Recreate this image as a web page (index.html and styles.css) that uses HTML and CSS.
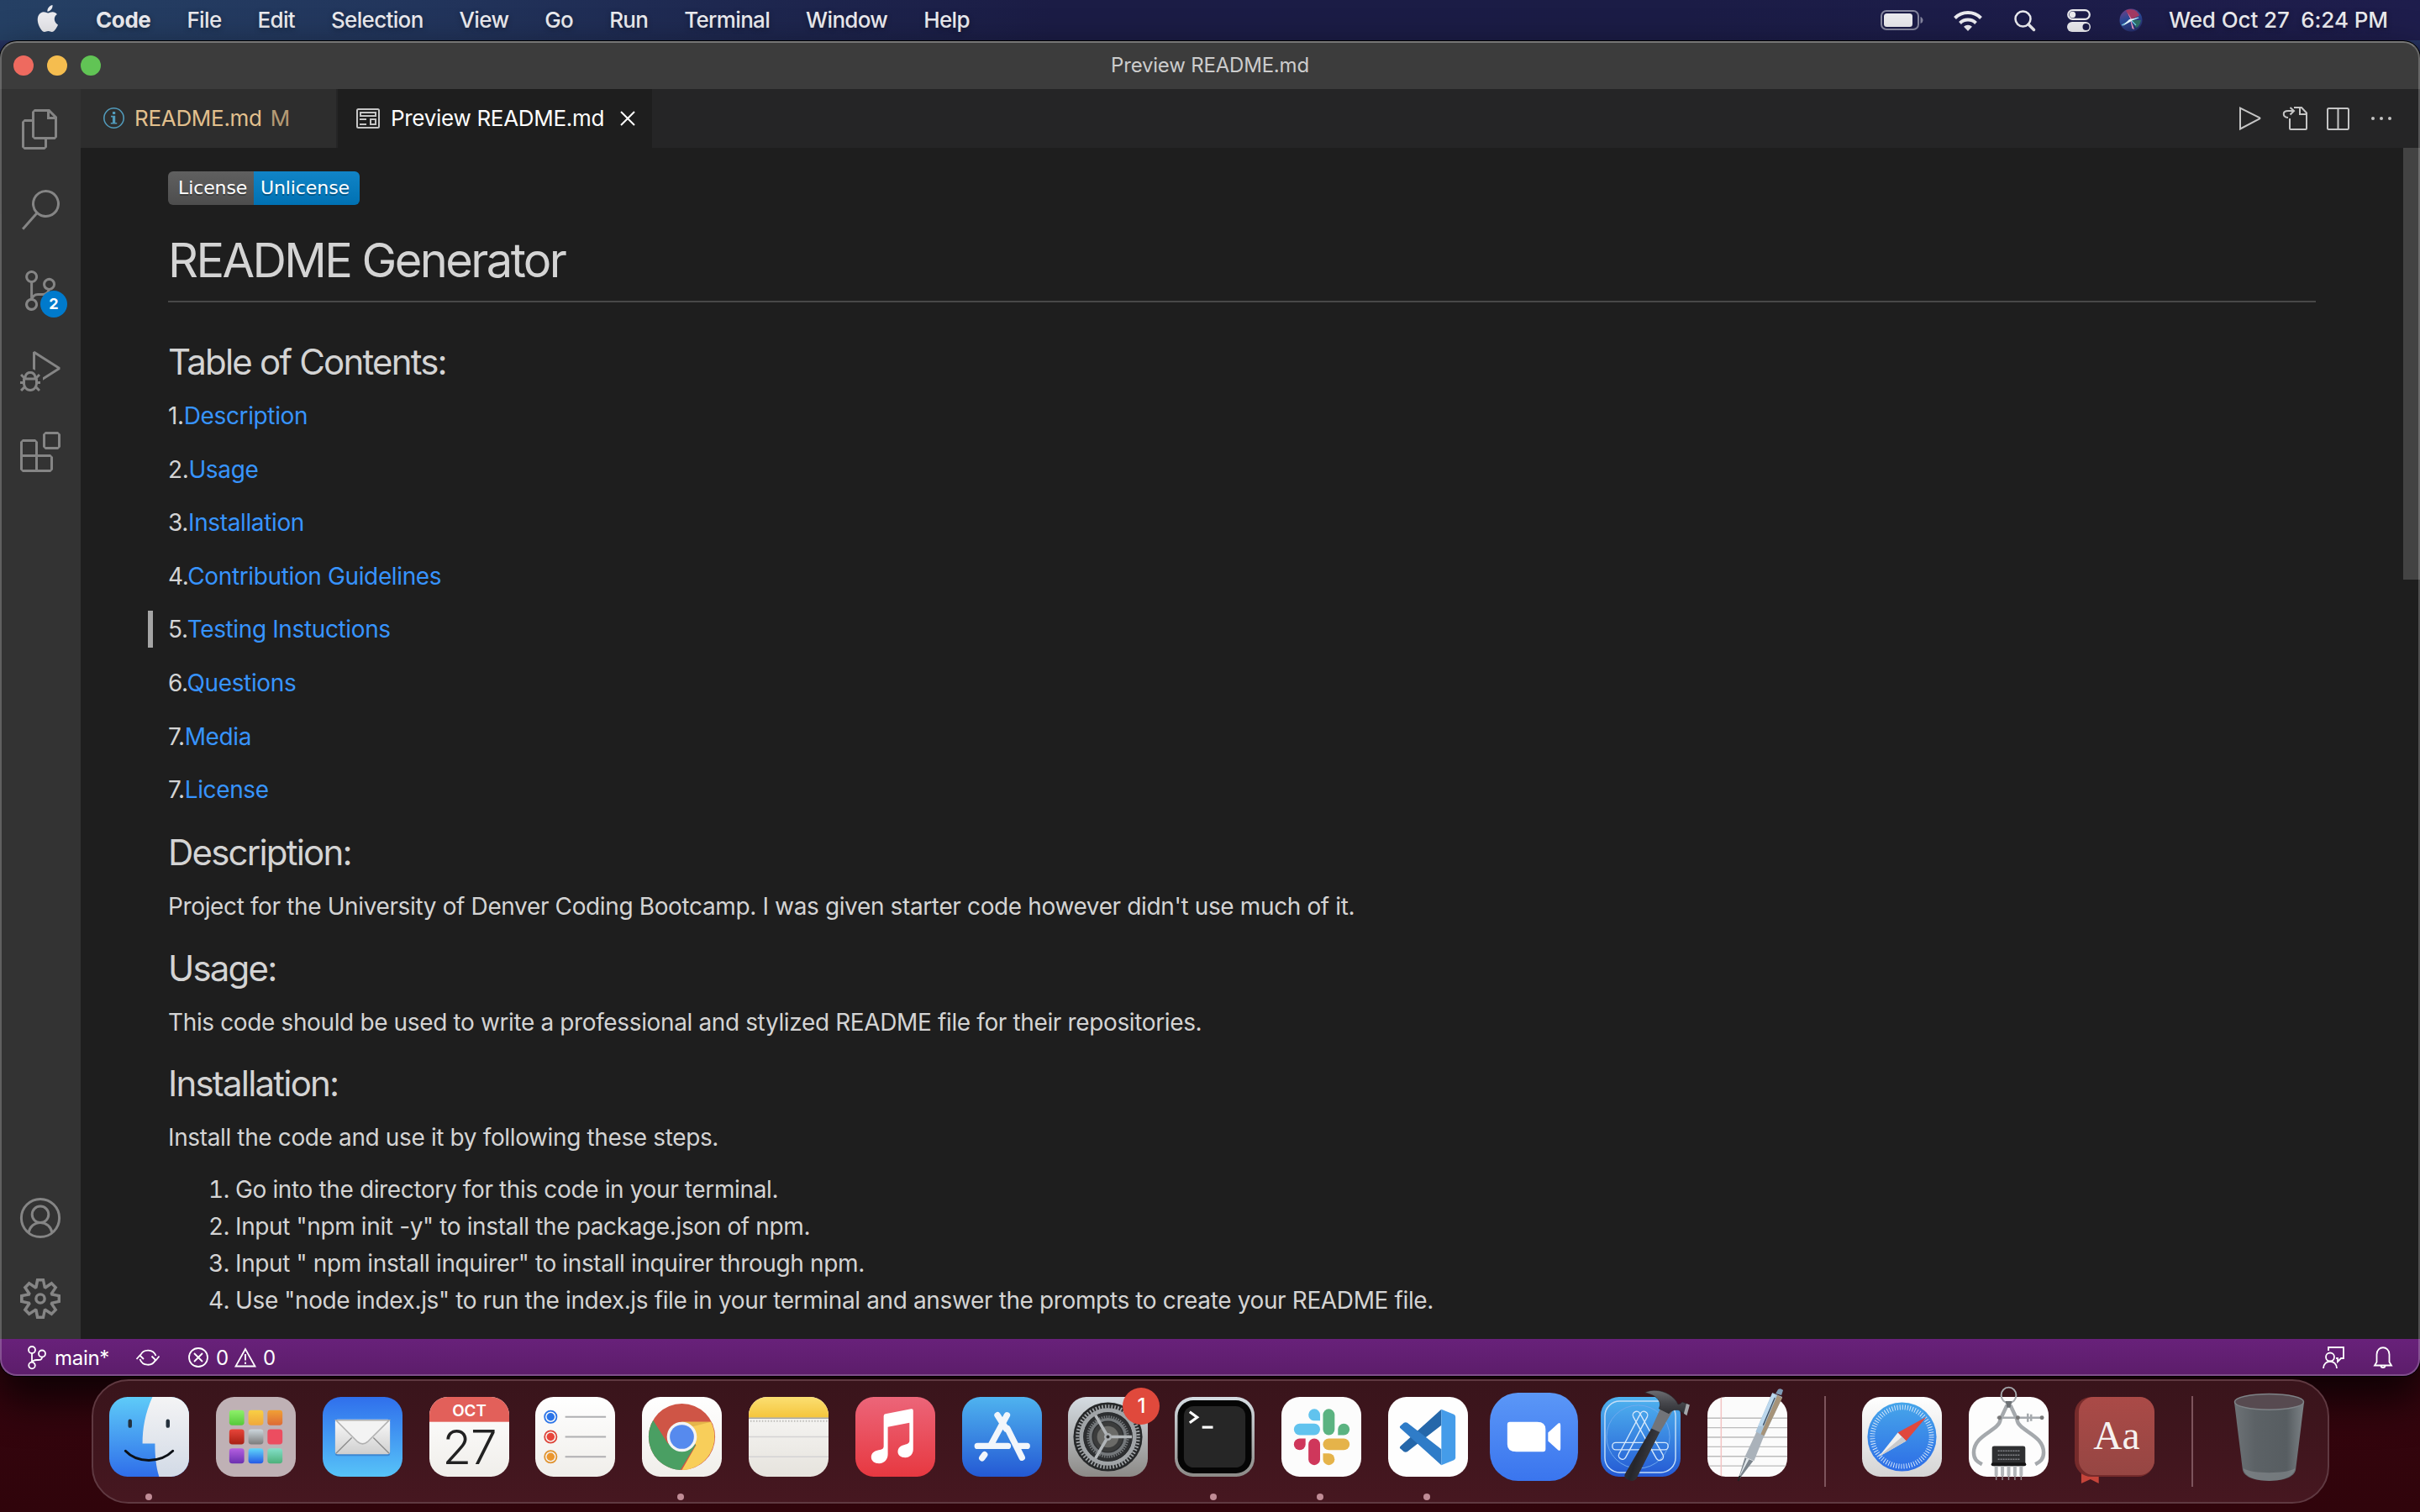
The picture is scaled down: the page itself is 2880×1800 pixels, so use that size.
FILE: index.html
```html
<!DOCTYPE html>
<html lang="en">
<head>
<meta charset="utf-8">
<title>Preview README.md</title>
<link rel="stylesheet" href="styles.css">
</head>
<body>
<header class="menubar">
  <svg class="apple" viewBox="0 0 26 32"><path fill="#ebebef" d="M18.500 0c.3 2.300-.6 4.200-1.800 5.600-1.200 1.400-2.800 2.300-4.300 2.100-.3-2.200.7-4.100 1.800-5.300C15.400 1.100 17.100.2 18.500 0zM25 23.500c-.9 2.100-1.400 3-2.500 4.700-1.500 2.200-3.100 3.700-4.700 3.700-1.700 0-2.200-1-4.400-1s-2.800 1-4.400 1c-1.800 0-3.300-1.600-4.700-3.700C.6 22.600-.4 15.700 2.200 11.800c1.400-2.200 3.500-3.500 5.800-3.500 2.100 0 3.500 1.100 5.300 1.100 1.700 0 2.800-1.100 5.300-1.100 2 0 3.900 1 5.300 2.800-4.600 2.700-3.900 9.900 1.100 12.400z"/></svg>
  <nav class="menus"><b>Code</b><span>File</span><span>Edit</span><span>Selection</span><span>View</span><span>Go</span><span>Run</span><span>Terminal</span><span>Window</span><span>Help</span></nav>
  <div class="extras">
    <svg class="battery" viewBox="0 0 51 24"><rect x="1" y="1" width="44" height="22" rx="6" fill="none" stroke="#85869f" stroke-width="2"/><rect x="4" y="4" width="34" height="16" rx="3.500" fill="#ebebef"/><path d="M47.500 8c4 1.500 4 6.500 0 8z" fill="#85869f"/></svg>
    <svg class="wifi" viewBox="0 0 34 25"><g fill="none" stroke="#ebebef" stroke-width="4"><path d="M1.500 9.500a22 22 0 0 1 31 0"/><path d="M7.500 15.500a13.500 13.500 0 0 1 19 0"/></g><path fill="#ebebef" d="M17 25l-5-5.300a7.500 7.500 0 0 1 10 0z"/></svg>
    <svg class="spot" viewBox="0 0 25 25"><circle cx="10.500" cy="10.500" r="9" fill="none" stroke="#ebebef" stroke-width="2.500"/><path d="M17 17l6.500 6.500" stroke="#ebebef" stroke-width="3.500" stroke-linecap="round"/></svg>
    <svg class="control" viewBox="0 0 28 27"><rect x="1.200" y="1.200" width="25.600" height="10.600" rx="5.300" fill="none" stroke="#ebebef" stroke-width="2.200"/><circle cx="6.500" cy="6.500" r="3.700" fill="#ebebef"/><rect y="15" width="28" height="12" rx="6" fill="#ebebef"/><circle cx="22.500" cy="21" r="4" fill="#1c1c48"/></svg>
    <svg class="siri" viewBox="0 0 28 28"><defs><linearGradient id="sr" x1="0" x2=".4" y1="0" y2="1"><stop offset="0" stop-color="#7d3f83"/><stop offset=".5" stop-color="#2b4a98"/><stop offset="1" stop-color="#27316f"/></linearGradient></defs><circle cx="14" cy="14" r="13.500" fill="url(#sr)"/><path d="M8 2.500c7-3 14 0 16 6l-10 5z" fill="#a33a63"/><path d="M26 14c-1 5-3 8-6 9l-5-9z" fill="#2e6f68"/><path d="M3 20l11-6 9-3M14 14l6 6" stroke="#74d6f2" stroke-width="1.200" fill="none"/><path d="M13 13l1 1 4 11-2.500-1zM10 5l5 8-1 1z" fill="#e79ac4"/><path d="M4 21l8-8 12-2-8 3-3 2z" fill="#e8faff"/></svg>
    <span class="clock">Wed Oct 27&nbsp; 6:24 PM</span>
  </div>
</header>

<main class="window">
  <div class="titlebar"><div class="lights"><i class="red"></i><i class="yellow"></i><i class="green"></i></div><span>Preview README.md</span></div>
  <div class="body">
    <aside class="activity">
      <div class="act"><svg viewBox="0 0 24 24"><path d="M17.500 0h-9L7 1.500V6H2.500L1 7.500v15.070L2.500 24h12.070L16 22.570V18h4.700l1.300-1.430V4.500L17.500 0zm0 2.120l2.380 2.380H17.500V2.120zm-3 20.380h-12v-15H7v9.070L8.500 18h6v4.500zm6-6h-12v-15H16V6h4.500v10.500z"/></svg></div>
      <div class="act"><svg viewBox="0 0 24 24"><path d="M15.250 0a8.250 8.250 0 0 0-6.180 13.720L1 22.880l1.120 1 8.050-9.120A8.251 8.251 0 1 0 15.250.01V0zm0 15a6.750 6.750 0 1 1 0-13.500 6.750 6.750 0 0 1 0 13.500z"/></svg></div>
      <div class="act"><svg viewBox="0 0 24 24"><path d="M21.007 8.222A3.738 3.738 0 0 0 15.045 5.200a3.737 3.737 0 0 0 1.156 6.583 2.988 2.988 0 0 1-2.668 1.670h-2.990a4.456 4.456 0 0 0-2.989 1.165V7.400a3.737 3.737 0 1 0-1.494 0v9.117a3.776 3.776 0 1 0 1.816.099 2.990 2.990 0 0 1 2.668-1.667h2.990a4.484 4.484 0 0 0 4.223-3.039 3.736 3.736 0 0 0 3.250-3.687zM4.565 3.738a2.242 2.242 0 1 1 4.484 0 2.242 2.242 0 0 1-4.484 0zm4.484 16.441a2.242 2.242 0 1 1-4.484 0 2.242 2.242 0 0 1 4.484 0zm8.221-9.715a2.242 2.242 0 1 1 0-4.485 2.242 2.242 0 0 1 0 4.485z"/></svg><b class="count">2</b></div>
      <div class="act"><svg viewBox="0 0 24 24"><path d="M10.940 13.500l-1.320 1.320a3.730 3.730 0 0 0-7.240 0L1.060 13.500 0 14.560l1.720 1.720-.22.22V18H0v1.500h1.500v.08c.077.489.214.966.41 1.420L0 22.940 1.060 24l1.650-1.650A4.308 4.308 0 0 0 6 24a4.310 4.310 0 0 0 3.290-1.650L10.940 24 12 22.940 10.090 21c.198-.464.336-.951.41-1.450v-.1H12V18h-1.500v-1.500l-.22-.22L12 14.560l-1.060-1.060zM6 13.500a2.250 2.250 0 0 1 2.250 2.250h-4.500A2.250 2.250 0 0 1 6 13.500zm3 6a3.330 3.330 0 0 1-3 3 3.330 3.330 0 0 1-3-3v-2.250h6v2.250zm14.760-9.900v1.260L13.500 17.370V15.600l8.500-5.370L9 2v9.460a5.070 5.070 0 0 0-1.500-.72V.63L8.640 0l15.120 9.600z"/></svg></div>
      <div class="act"><svg viewBox="0 0 24 24"><path d="M13.500 1.500L15 0h7.500L24 1.500V9l-1.500 1.500H15L13.500 9V1.500zm1.500 0V9h7.500V1.500H15zM0 15V6l1.500-1.500H9L10.500 6v7.500H18l1.500 1.500v7.500L18 24H1.500L0 22.500V15zm9-1.500V6H1.500v7.500H9zM9 15H1.500v7.500H9V15zm1.500 7.500H18V15h-7.500v7.500z"/></svg></div>
      <div class="act last"><svg viewBox="0 0 24 24" class="line"><circle cx="12" cy="12" r="11.300"/><circle cx="12" cy="9.900" r="4.900"/><path d="M5 20.800c.6-3.500 3.400-6.100 7-6.100s6.400 2.600 7 6.100"/></svg></div>
      <div class="act"><svg viewBox="0 0 24 24"><path fill-rule="evenodd" d="M19.850 8.750l4.150.83v4.840l-4.150.83 2.350 3.520-3.430 3.430-3.520-2.350-.83 4.150H9.580l-.83-4.150-3.520 2.350-3.430-3.430 2.350-3.520L0 14.420V9.580l4.150-.83L1.800 5.230 5.230 1.800l3.520 2.350L9.580 0h4.840l.83 4.150 3.520-2.350 3.430 3.430-2.350 3.520zm-1.570 5.070l4-.81v-2l-4-.81-.54-1.300 2.290-3.430-1.430-1.430-3.430 2.290-1.300-.54-.81-4h-2l-.81 4-1.300.54-3.430-2.290-1.430 1.430L6.380 8.900l-.54 1.300-4 .81v2l4 .81.540 1.300-2.290 3.430 1.430 1.430 3.430-2.290 1.300.54.810 4h2l.81-4 1.300-.54 3.430 2.290 1.430-1.430-2.290-3.430.54-1.300zM12 8.570a3.430 3.430 0 1 1 0 6.860 3.430 3.430 0 0 1 0-6.860zm0 1.720a1.710 1.710 0 1 0 0 3.420 1.710 1.710 0 0 0 0-3.420z"/></svg></div>
    </aside>
    <section class="editor">
      <div class="tabs">
        <div class="tab idle"><svg class="info" viewBox="0 0 25 25"><circle cx="12.500" cy="12.500" r="11.700" fill="none" stroke="#519aba" stroke-width="1.600"/><path fill="#519aba" d="M11 5h3.200v3H11zM9 9.800h5.200v8.200h2v1.600H8.800V18h2.200v-6.600H9z"/></svg><span>README.md</span><em>M</em></div>
        <div class="tab active"><svg class="pv" viewBox="0 0 28 24"><g fill="none" stroke="#c5c5c5" stroke-width="2"><rect x="1" y="1" width="26" height="22" rx="1.500"/><rect x="5" y="5" width="18" height="4"/><path d="M4 13h8M4 19h8"/><rect x="17" y="13" width="6" height="6"/></g></svg><span>Preview README.md</span><svg class="close" viewBox="0 0 18 18"><path d="M1 1l16 16M17 1L1 17" stroke="#fff" stroke-width="2"/></svg></div>
        <div class="actions">
          <svg class="play" viewBox="0 0 28 28"><path d="M2 1.500v25L25 14.500q1-.7 0-1.400z"/></svg>
          <svg class="open" viewBox="0 0 30 28"><path d="M14 1h9l6 6.500V26q0 1-1 1H10q-1 0-1-1V14M21 1.500V9h7.500"/><path d="M7 13c-7-1-7-8 0-8h6M9.500 1L14 5l-4.500 4.500"/></svg>
          <svg class="split" viewBox="0 0 27 27"><rect x="1" y="1" width="25" height="25" rx="1.500"/><path d="M13.500 1v25"/></svg>
          <svg class="more" viewBox="0 0 26 6"><g fill="#c5c5c5" stroke="none"><circle cx="3" cy="3" r="2"/><circle cx="13" cy="3" r="2"/><circle cx="23" cy="3" r="2"/></g></svg>
        </div>
      </div>
      <div class="preview">
        <article class="md">
          <div class="shield"><span class="key">License</span><span class="val">Unlicense</span></div>
          <h1>README Generator</h1>
          <h2 class="first">Table of Contents:</h2>
          <div class="toc">
            <p>1.<a>Description</a></p>
            <p>2.<a>Usage</a></p>
            <p>3.<a>Installation</a></p>
            <p>4.<a>Contribution Guidelines</a></p>
            <p class="current">5.<a>Testing Instuctions</a></p>
            <p>6.<a>Questions</a></p>
            <p>7.<a>Media</a></p>
            <p>7.<a>License</a></p>
          </div>
          <h2>Description:</h2>
          <p>Project for the University of Denver Coding Bootcamp. I was given starter code however didn't use much of it.</p>
          <h2>Usage:</h2>
          <p>This code should be used to write a professional and stylized README file for their repositories.</p>
          <h2>Installation:</h2>
          <p>Install the code and use it by following these steps.</p>
          <ol>
            <li>Go into the directory for this code in your terminal.</li>
            <li>Input "npm init -y" to install the package.json of npm.</li>
            <li>Input " npm install inquirer" to install inquirer through npm.</li>
            <li>Use "node index.js" to run the index.js file in your terminal and answer the prompts to create your README file.</li>
          </ol>
        </article>
        <div class="scroll"></div>
      </div>
    </section>
  </div>
  <footer class="status">
    <svg class="branch" viewBox="0 0 22 28"><circle cx="5" cy="5" r="4"/><circle cx="5" cy="23.500" r="3.800"/><circle cx="17" cy="9.500" r="4"/><path d="M5 9v10.500M17 13.500c0 4-3 3.500-6 3.500s-5 .5-6 3"/></svg>
    <span class="br">main*</span>
    <svg class="sync" viewBox="0 0 28 22"><path d="M5 8.500A10 10 0 0 1 23.500 9M23 14A10 10 0 0 1 4.500 13"/><path d="M18.500 9.500l5 5 4-5M.500 13l4-4.500 4.500 4.500"/></svg>
    <svg class="err" viewBox="0 0 24 24"><circle cx="12" cy="12" r="11"/><path d="M7 7l10 10M17 7L7 17"/></svg>
    <span class="n1">0</span>
    <svg class="warn" viewBox="0 0 26 24"><path d="M13 2L1.500 22.500h23zM13 8v7.500M13 17.500V20"/></svg>
    <span class="n2">0</span>
    <svg class="fb" viewBox="0 0 26 26"><path d="M7 5V1h18v13h-3l-4 4v-4h-2"/><circle cx="9" cy="12.500" r="5"/><path d="M1 26c0-11 16-11 16 0"/></svg>
    <svg class="bell" viewBox="0 0 22 26"><path d="M3.500 18.500V9.500c0-11 15-11 15 0v9l2.500 4H1z"/><path d="M8.500 22.500c0 3.500 5 3.500 5 0"/></svg>
  </footer>
</main>

<div class="dock">
  <div class="app on"><svg viewBox="0 0 96 96"><defs><linearGradient id="f1" x2="0" y2="1"><stop stop-color="#5ecbf8"/><stop offset="1" stop-color="#2f6eea"/></linearGradient><linearGradient id="f2" x2="0" y2="1"><stop stop-color="#f4f4f5"/><stop offset="1" stop-color="#d2dae6"/></linearGradient><clipPath id="t"><rect width="96" height="96" rx="22"/></clipPath></defs><g clip-path="url(#t)"><rect width="96" height="96" fill="url(#f1)"/><path d="M52 0C43 20 40 38 40 56h15c0 14 1 27 5 40h36V0z" fill="url(#f2)"/></g><path d="M25 29v6M70.500 29v6" stroke="#23303c" stroke-width="4.500" stroke-linecap="round"/><path d="M19.500 65c14 15 42 15 57 0" fill="none" stroke="#0c1016" stroke-width="3" stroke-linecap="round"/></svg></div>
  <div class="app"><svg viewBox="0 0 96 96"><defs><linearGradient id="l1" x2="0" y2="1"><stop stop-color="#8ef06a"/><stop offset="1" stop-color="#56c93a"/></linearGradient><linearGradient id="l2" x2="0" y2="1"><stop stop-color="#f8cf45"/><stop offset="1" stop-color="#f0a83a"/></linearGradient><linearGradient id="l3" x2="0" y2="1"><stop stop-color="#f0a035"/><stop offset="1" stop-color="#dd6a35"/></linearGradient><linearGradient id="l4" x2="0" y2="1"><stop stop-color="#e8453a"/><stop offset="1" stop-color="#a81f14"/></linearGradient><linearGradient id="l5" x2="0" y2="1"><stop stop-color="#ccd6dc"/><stop offset="1" stop-color="#7c7c7c"/></linearGradient><linearGradient id="l7" x2="0" y2="1"><stop stop-color="#b45fe0"/><stop offset="1" stop-color="#6b30b0"/></linearGradient><linearGradient id="l8" x2="0" y2="1"><stop stop-color="#5fd6fa"/><stop offset="1" stop-color="#2459e6"/></linearGradient><linearGradient id="l9" x2="0" y2="1"><stop stop-color="#83dfc8"/><stop offset="1" stop-color="#4db07a"/></linearGradient></defs><rect width="96" height="96" rx="22" fill="#bfb1b5"/><g><rect x="16" y="16" width="18" height="18" rx="3.500" fill="url(#l1)"/><rect x="39" y="16" width="18" height="18" rx="3.500" fill="url(#l2)"/><rect x="62" y="16" width="18" height="18" rx="3.500" fill="url(#l3)"/><rect x="16" y="39" width="18" height="18" rx="3.500" fill="url(#l4)"/><rect x="39" y="39" width="18" height="18" rx="3.500" fill="url(#l5)"/><rect x="62" y="39" width="18" height="18" rx="3.500" fill="#ec4d60"/><rect x="16" y="62" width="18" height="18" rx="3.500" fill="url(#l7)"/><rect x="39" y="62" width="18" height="18" rx="3.500" fill="url(#l8)"/><rect x="62" y="62" width="18" height="18" rx="3.500" fill="url(#l9)"/></g></svg></div>
  <div class="app"><svg viewBox="0 0 96 96"><defs><linearGradient id="m1" x2="0" y2="1"><stop stop-color="#2f6fec"/><stop offset="1" stop-color="#57c3f8"/></linearGradient><linearGradient id="m2" x2="0" y2="1"><stop stop-color="#fafafa"/><stop offset="1" stop-color="#cfcfcf"/></linearGradient></defs><rect width="96" height="96" rx="22" fill="url(#m1)"/><rect x="15" y="29" width="66" height="42" rx="3" fill="#2a62b0" opacity=".5"/><rect x="15" y="27" width="66" height="42" rx="3" fill="url(#m2)"/><path d="M16 68l19-19M80 68L61 49" stroke="#8a8a8a" stroke-width="1.300"/><path d="M16 28l26 26q6 5 12 0l26-26z" fill="#f3f3f3" stroke="#b0b0b0" stroke-width="1.600"/></svg></div>
  <div class="app"><svg viewBox="0 0 96 96"><defs><linearGradient id="c1" x2="0" y2="1"><stop stop-color="#fff"/><stop offset="1" stop-color="#f0eeea"/></linearGradient></defs><g clip-path="url(#t)"><rect width="96" height="96" fill="url(#c1)"/><rect width="96" height="30" fill="#e2605a"/></g><text x="48" y="23" class="oct">OCT</text><text x="48" y="81" class="day">27</text></svg></div>
  <div class="app"><svg viewBox="0 0 96 96"><rect width="96" height="96" rx="22" fill="url(#c1)"/><g fill="none" stroke-width="1.800"><circle cx="18.500" cy="24" r="7.200" stroke="#2b74e8"/><circle cx="18.500" cy="48" r="7.200" stroke="#dd4438"/><circle cx="18.500" cy="72" r="7.200" stroke="#e0922e"/><path d="M36 24h49M36 48h49M36 72h49" stroke="#b0b0b2"/></g><circle cx="18.500" cy="24" r="4.800" fill="#2b74e8"/><circle cx="18.500" cy="48" r="4.800" fill="#e8453a"/><circle cx="18.500" cy="72" r="4.800" fill="#eb962e"/></svg></div>
  <div class="app on"><svg viewBox="0 0 96 96"><rect width="96" height="96" rx="22" fill="url(#c1)"/><circle cx="48" cy="48" r="40" fill="#cf5546"/><path d="M13.400 28A40 40 0 0 0 46 88l19-31-34-1z" fill="#4a9f63"/><path d="M83 30H48l17 28-17 30A40 40 0 0 0 83 30z" fill="#f8ce5a"/><path d="M83 30H48v9z" fill="#e5b54a"/><circle cx="48" cy="48" r="18" fill="#f4f4f4"/><circle cx="48" cy="48" r="14.500" fill="#568aee"/></svg></div>
  <div class="app"><svg viewBox="0 0 96 96"><defs><linearGradient id="n1" x2="0" y2="1"><stop stop-color="#fbdf72"/><stop offset="1" stop-color="#f5c53c"/></linearGradient><linearGradient id="n2" x2="0" y2="1"><stop stop-color="#f9f9f8"/><stop offset="1" stop-color="#e6e3dd"/></linearGradient></defs><g clip-path="url(#t)"><rect width="96" height="96" fill="url(#n2)"/><rect width="96" height="25" fill="url(#n1)"/><path d="M0 25.500h96" stroke="#a5a4a0" stroke-width="1.600"/><path d="M2 29h94" stroke="#bdbcb9" stroke-width="2" stroke-dasharray="1.500 2"/><path d="M0 48h96M0 72h96" stroke="#d4d3d4" stroke-width="1.700"/></g></svg></div>
  <div class="app"><svg viewBox="0 0 96 96"><defs><linearGradient id="mu" x2="0" y2="1"><stop stop-color="#ec6579"/><stop offset="1" stop-color="#e73840"/></linearGradient></defs><rect width="96" height="96" rx="22" fill="url(#mu)"/><path fill="#fff" d="M34 23q0-2 2-2.500l31-6q2.500-.5 2.500 2V63c0 6-4 10-9.500 10s-9-3-9-7c0-5 3.500-7.500 8-8.500 4-1 6-2 6-5V31L39 36v33c0 6-4 11-10.500 11C23 80 19 77 19 72.500c0-5 4-7.500 9-8.500 4-1 6-1.500 6-5z"/></svg></div>
  <div class="app"><svg viewBox="0 0 96 96"><defs><linearGradient id="as" x2="0" y2="1"><stop stop-color="#4fb3ef"/><stop offset="1" stop-color="#2459d4"/></linearGradient></defs><rect width="96" height="96" rx="22" fill="url(#as)"/><g stroke="#f2f6fb" stroke-width="7.500" stroke-linecap="round" fill="none"><path d="M42.500 22L53 38.500M54.500 38l17.500 35M54 22L35 57M18.500 59H55M66 59h12M27 69.500l-3 4"/></g></svg></div>
  <div class="app"><svg viewBox="0 0 96 96"><defs><linearGradient id="sp" x2="0" y2="1"><stop stop-color="#d5dce2"/><stop offset="1" stop-color="#8c8a87"/></linearGradient></defs><rect width="96" height="96" rx="22" fill="url(#sp)"/><circle cx="48" cy="48" r="41.500" fill="#262829"/><circle cx="48" cy="48" r="36.500" fill="none" stroke="#a0a4a7" stroke-width="4.500" stroke-dasharray="1.800 2.020"/><circle cx="48" cy="48" r="32" fill="none" stroke="#a0a4a7" stroke-width="5"/><circle cx="48" cy="48" r="29.500" fill="#2c2e30"/><circle cx="48" cy="48" r="24" fill="none" stroke="#74787b" stroke-width="3" stroke-dasharray="1.500 1.400"/><circle cx="48" cy="48" r="21" fill="none" stroke="#74787b" stroke-width="3.500"/><circle cx="48" cy="48" r="18" fill="#3b3c3c"/><circle cx="48" cy="48" r="13" fill="#6b6b68"/><path d="M48 48h29M48 48L33 22M48 48L33 74" stroke="#b2b6b9" stroke-width="3.600"/><circle cx="48" cy="48" r="4.500" fill="#a9adb0"/><circle cx="48" cy="48" r="2" fill="#333"/></svg><b class="notif">1</b></div>
  <div class="app on"><svg viewBox="0 0 96 96"><rect width="96" height="96" rx="22" fill="url(#sp)"/><rect x="3.500" y="4" width="89" height="88" rx="19" fill="#050505"/><rect x="11" y="11" width="74" height="74" rx="12" fill="#262626"/><path d="M18 18l9 6.500-9 6.500" fill="none" stroke="#fff" stroke-width="3.200"/><path d="M33 36.500h13" stroke="#fff" stroke-width="3.200"/></svg></div>
  <div class="app on"><svg viewBox="0 0 96 96"><rect width="96" height="96" rx="22" fill="#fcfcfc"/><g stroke-width="14" stroke-linecap="round"><path d="M57 21.500v17.500" stroke="#5bb381"/><path d="M22 39h17.500" stroke="#61c3ee"/><path d="M39.500 57v18" stroke="#cf375b"/><path d="M57 57h18" stroke="#e5b34a"/></g><path d="M46.500 28.500H39a7 7 0 1 1 7.500-7z" fill="#61c3ee"/><path d="M68 46v-7a7 7 0 1 1 7 7z" fill="#5bb381"/><path d="M50 68h7a7 7 0 1 1-7 7z" fill="#e5b34a"/><path d="M29 50v7a7 7 0 1 1-7-7z" fill="#cf375b"/></svg></div>
  <div class="app on"><svg viewBox="0 0 96 96"><rect width="96" height="96" rx="22" fill="#fefefe"/><path d="M64 15L15 59q-2 2 0 3.500l4 3.500q2 1 4 0l41-32z" fill="#2567aa"/><path d="M64 82L15 38q-2-2 0-3.500l4-3.500q2-1 4 0l41 32z" fill="#2f7cc8"/><path d="M64 15l15 6q2 1 2 3v49q0 2-2 3l-15 6z" fill="#459ce9"/></svg></div>
  <div class="app"><svg viewBox="0 0 96 96"><defs><linearGradient id="zm" x2="0" y2="1"><stop stop-color="#5b97f7"/><stop offset="1" stop-color="#3a75ee"/></linearGradient></defs><rect x="-5" y="-5" width="106" height="106" rx="34" fill="url(#zm)"/><path fill="#fff" d="M16 33q0-3 3-3h33q10 0 10 9v24q0 3-3 3H27q-11 0-11-9zM65 43l12-11q3-2 3 2v28q0 4-3 2L65 53z"/></svg></div>
  <div class="app"><svg viewBox="0 0 96 96"><defs><linearGradient id="hm" x1="0" x2="1" y2=".5"><stop stop-color="#38383c"/><stop offset=".5" stop-color="#26262b"/><stop offset="1" stop-color="#45464c"/></linearGradient><linearGradient id="hh" x2="0" y2="1"><stop stop-color="#6d6e73"/><stop offset=".5" stop-color="#46474c"/><stop offset="1" stop-color="#2b2c30"/></linearGradient></defs><rect width="96" height="96" rx="22" fill="url(#as)"/><g fill="none" stroke="#c4def8" stroke-width="1.500"><rect x="5" y="5" width="85" height="86" rx="18"/><circle cx="45" cy="48" r="38" stroke="#6ea9ee" stroke-width="1"/><g stroke="#d5e8fb" stroke-width="1.400"><rect x="14" y="55" width="67" height="8.500" rx="4"/><rect x="-4.500" y="0" width="9" height="64" rx="4.500" transform="translate(54 18) rotate(28)"/><rect x="-4.500" y="0" width="9" height="66" rx="4.500" transform="translate(41 18) rotate(-29)"/></g></g><path d="M73 11l14 5-16 27-10-5z" fill="#727479"/><path d="M61 38l10 4.500L43 98q-3 5-9 2-7-2-5-7z" fill="url(#hm)"/><path d="M53-5c8-5 21-3 29 2 5 3 9 7 11 12l3-1 2-2 8 3-3 13-9-6c-5-1-9 0-12 4l-12-6c4-8-2-16-17-19z" fill="url(#hh)" stroke="#232428" stroke-width=".6"/><path d="M103 8l4 1.500-3.500 13L100 20z" fill="#a5a7ab"/></svg></div>
  <div class="app"><svg viewBox="0 0 96 96"><g clip-path="url(#t)"><rect width="96" height="96" fill="#fbfbfb"/><path d="M0 25.500h96M0 37h96M0 48.500h96M0 60h96M0 71.500h96M0 83h96" stroke="#bcbcbc" stroke-width="1.300"/><path d="M16.500 0v96" stroke="#f2c4c4" stroke-width="1.500"/></g><path d="M85-9q3-2 6 1l-2 6-7-2z" fill="#7f9bb5"/><path d="M78-5l12 5-22 48-10-6z" fill="#a9c4da"/><path d="M84-2l6 3-22 46-4-2z" fill="#a69379"/><path d="M78-4l4 2-16 37-5 0z" fill="#bcd8ee"/><path d="M81 1L67 34" stroke="#3d4e60" stroke-width="1.300"/><path d="M59 42l9 5-12 30-11-5z" fill="#aab2ba"/><path d="M45 73l10 4-16 21-2 1z" fill="#7c858d"/><path d="M47 74l3 1-12 22z" fill="#e2e8ec"/><path d="M39 95l-2 6" stroke="#222" stroke-width="2"/></svg></div>
  <i class="sep"></i>
  <div class="app"><svg viewBox="0 0 96 96"><defs><linearGradient id="sf" x2="0" y2="1"><stop stop-color="#fff"/><stop offset="1" stop-color="#d4d4d4"/></linearGradient><linearGradient id="sg" x2="0" y2="1"><stop stop-color="#47a6ea"/><stop offset="1" stop-color="#2d6de6"/></linearGradient></defs><rect width="96" height="96" rx="22" fill="url(#sf)"/><circle cx="48" cy="48" r="41.500" fill="url(#sg)"/><circle cx="48" cy="48" r="35.500" fill="none" stroke="#d5e6fa" stroke-width="6" stroke-dasharray="1 2.098"/><path d="M77.500 24L43 43l10 10z" fill="#e0483e"/><path d="M20 72l23-29 10 10z" fill="#f0f0f0"/><path d="M20 72l28-24 5 5z" fill="#c8c9cc"/></svg></div>
  <div class="app"><svg viewBox="0 0 96 96"><rect width="96" height="96" rx="22" fill="#fdfdfd"/><g fill="none" stroke="#a5a9ad"><ellipse cx="48" cy="-2" rx="9" ry="9.500" stroke-width="2"/><path d="M46 10L38 27c-1 14-32 18-32 40 0 8 4 11 10 14" stroke-width="4.500"/><path d="M50 10l8 17c1 14 32 18 32 40 0 8-4 11-10 14" stroke-width="4.500"/><path d="M34 25h54" stroke-width="2.500"/><path d="M71 20v10M75 21v8" stroke-width="2.500"/></g><path d="M44 5h8l-2 8h-4z" fill="#6d7175"/><circle cx="37" cy="25" r="2.500" fill="#777"/><circle cx="59" cy="25" r="2.500" fill="#777"/><circle cx="88" cy="25" r="2.500" fill="#777"/><rect x="28" y="59" width="40" height="24" rx="2.500" fill="#2f3032"/><rect x="27" y="79" width="42" height="4" rx="2" fill="#161617"/><path d="M35 65h26M35 70h26M35 75h26" stroke="#85868a" stroke-width="1.500" stroke-dasharray="2 1"/><path d="M33 83v12M40.500 83v12M48 83v12M55.500 83v12M63 83v12" stroke="#b4b7ba" stroke-width="4"/><path d="M33 95v5M40.500 95v5M48 95v5M55.500 95v5M63 95v5" stroke="#8c8084" stroke-width="1.500"/></svg></div>
  <div class="app"><svg viewBox="0 0 96 96"><defs><linearGradient id="di" x2="0" y2="1"><stop stop-color="#aa4a47"/><stop offset="1" stop-color="#964643"/></linearGradient></defs><path d="M8 90h21v14l-10-5-11 5z" fill="#c5443a"/><rect width="96" height="96" rx="20" fill="#762b2b"/><rect x="5" width="91" height="94" rx="18" fill="url(#di)"/><text x="50.500" y="63" class="dict">Aa</text></svg></div>
  <i class="sep"></i>
  <div class="app"><svg viewBox="0 0 96 96"><defs><linearGradient id="tr"><stop stop-color="#6d7276"/><stop offset=".3" stop-color="#5c6266"/><stop offset=".75" stop-color="#575d61"/><stop offset="1" stop-color="#7c8286"/></linearGradient></defs><path d="M6 6l10 81c1 8 11 14 32 14s31-6 32-14L90 6z" fill="url(#tr)"/><path d="M17 86c10 7 52 7 62 0-1 9-12 15-31 15s-30-6-31-15z" fill="#8a8f93" opacity=".55"/><ellipse cx="48" cy="6" rx="41.500" ry="9.500" fill="#574a50" stroke="#7e8387" stroke-width="1.500"/></svg></div>
</div>
</body>
</html>
```
FILE: styles.css
```css
* { box-sizing: border-box; }
body {
  margin: 0;
  width: 2880px;
  height: 1800px;
  overflow: hidden;
  display: flex;
  flex-direction: column;
  font-family: Inter, "Liberation Sans", sans-serif;
  background: linear-gradient(180deg, #35588a 0, #1c1c48 80px, #2b0613 900px, #36050f 1600px, #30040b 1800px);
}
svg { display: block; overflow: visible; flex: none; }

/* Menu bar */
.menubar {
  height: 48px;
  flex: none;
  display: flex;
  align-items: center;
  padding: 0 36px 0 44px;
  color: #ebebef;
  font-size: 26px;
  font-weight: 500;
  background: linear-gradient(90deg, #254064 0, #22355c 500px, #1e2850 850px, #1b1c45 1250px, #1b1c46 2000px, #1e1d4c 100%);
  text-shadow: 0 2px 6px rgba(0, 0, 0, .35);
}
.apple { width: 26px; height: 32px; margin-top: -4px; }
.menus { display: flex; gap: 43px; margin-left: 44px; padding-bottom: 1px; letter-spacing: -.67px; }
.menus b { font-weight: 700; letter-spacing: -.4px; }
.extras { display: flex; align-items: center; margin-left: auto; }
.battery { width: 51px; height: 24px; }
.wifi { width: 34px; height: 25px; margin-left: 36px; }
.spot { width: 25px; height: 25px; margin-left: 38px; }
.control { width: 28px; height: 27px; margin-left: 38px; }
.siri { width: 28px; height: 28px; margin-left: 34px; }
.clock { margin-left: 31px; width: 263px; padding-bottom: 1px; white-space: nowrap; letter-spacing: -.1px; }

/* Window */
.window {
  position: relative;
  flex: none;
  height: 1589px;
  margin-top: 1px;
  border-radius: 20px;
  overflow: hidden;
  display: flex;
  flex-direction: column;
  background: #1e1e1e;
  box-shadow: 0 0 0 1px #000, 0 24px 50px 4px rgba(0, 0, 0, .75);
}
.window::after {
  content: "";
  position: absolute;
  inset: 0;
  border: 2px solid rgba(255, 255, 255, .22);
  border-top-color: rgba(255, 255, 255, .3);
  border-radius: 20px;
  pointer-events: none;
}
.titlebar {
  height: 57px;
  flex: none;
  position: relative;
  display: flex;
  align-items: center;
  justify-content: center;
  background: #3c3c3c;
  color: #ccc;
  font-size: 24px;
  letter-spacing: -.2px;
}
.lights { position: absolute; left: 16px; top: 17px; display: flex; gap: 16px; }
.lights i { width: 24px; height: 24px; border-radius: 50%; }
.red { background: #ee6a5f; }
.yellow { background: #f5bd4f; }
.green { background: #61c455; }
.body { flex: 1; display: flex; min-height: 0; }

.activity { width: 96px; background: #333; display: flex; flex-direction: column; }
.act { height: 96px; position: relative; display: flex; align-items: center; justify-content: center; }
.act svg { width: 48px; height: 48px; fill: #858585; }
.act svg.line { fill: none; stroke: #858585; stroke-width: 1.5; }
.last { margin-top: auto; }
.count {
  position: absolute;
  left: 48px;
  top: 48px;
  width: 32px;
  height: 32px;
  border-radius: 50%;
  background: #007acc;
  color: #fff;
  font-size: 18px;
  line-height: 31px;
  text-align: center;
}

.editor { flex: 1; display: flex; flex-direction: column; min-width: 0; }
.tabs { height: 70px; flex: none; display: flex; background: #252526; font-size: 26px; }
.tab { display: flex; align-items: center; }
.tab span, .tab em { padding-bottom: 1px; }
.idle { width: 306px; background: #2d2d2d; border-right: 2px solid #252526; color: #e2c08d; padding-left: 27px; }
.info { width: 25px; height: 25px; margin-right: 12px; margin-top: -1px; }
.idle span, .idle em { letter-spacing: -.3px; }
.idle em { font-style: normal; margin-left: 10px; opacity: .75; }
.active { width: 374px; background: #1e1e1e; color: #fff; padding-left: 22px; }
.pv { width: 28px; height: 24px; margin-right: 13px; }
.active span { width: 254px; white-space: nowrap; letter-spacing: -.3px; }
.close { width: 18px; height: 18px; margin-left: 19px; }
.actions { margin-left: auto; margin-right: 33px; display: flex; align-items: center; }
.actions svg { fill: none; stroke: #c5c5c5; stroke-width: 2; }
.play { width: 28px; height: 28px; margin-right: 24px; }
.open { width: 30px; height: 28px; margin-right: 23px; }
.split { width: 27px; height: 27px; margin-right: 25px; }
.more { width: 26px; height: 6px; }

.preview { flex: 1; display: flex; min-height: 0; background: #1e1e1e; }
.md {
  flex: 1;
  padding: 28px 104px 0;
  color: #d4d4d4;
  font-size: 28px;
  line-height: 44px;
  letter-spacing: -.37px;
}
.scroll { width: 20px; height: 514px; background: #434343; }
.shield {
  display: flex;
  width: 228px;
  height: 40px;
  border-radius: 6px;
  overflow: hidden;
  color: #fff;
  font: 22px/40px "DejaVu Sans", sans-serif;
  letter-spacing: -.1px;
  text-shadow: 0 2px 0 rgba(1, 1, 1, .3);
}
.key { width: 102px; padding-left: 12px; background: linear-gradient(#606060, #4d4d4d); }
.val { flex: 1; padding-left: 8px; background: linear-gradient(#1184c7, #0071b3); }
h1 {
  margin: 31.6px 0 0;
  padding-bottom: 14.4px;
  border-bottom: 2px solid #484848;
  font-size: 56px;
  line-height: 68px;
  font-weight: 400;
  letter-spacing: -2.6px;
}
h2 { margin: 26.2px 0 17.3px; font-size: 42px; line-height: 50px; font-weight: 400; letter-spacing: -1.8px; }
h2.first { margin-top: 45.7px; }
.md p { margin: 0 0 19.6px; }
.toc + h2 { margin-top: 28px; }
.toc a { color: #3794ff; }
.current { position: relative; }
.current::before { content: ""; position: absolute; left: -24px; top: 0; width: 6px; height: 44px; background: #a5a5a5; }
ol { margin: -1.7px 0 0; padding-left: 80px; }

.status {
  height: 44px;
  flex: none;
  display: flex;
  align-items: center;
  padding: 0 33px;
  background: linear-gradient(#68217a, #5c1d6a);
  color: #fff;
  font-size: 24px;
}
.status svg { fill: none; stroke: #fff; stroke-width: 1.8; }
.branch { width: 22px; height: 28px; }
.br { width: 65px; margin-left: 10px; letter-spacing: -.3px; }
.sync { width: 28px; height: 22px; margin-left: 32px; }
.err { width: 24px; height: 24px; margin-left: 34px; }
.n1, .n2 { margin-left: 9px; width: 14px; }
.warn { width: 26px; height: 24px; margin-left: 8px; }
.n2 { margin-left: 8px; }
.fb { width: 26px; height: 26px; margin-left: auto; }
.bell { width: 22px; height: 26px; margin-left: 35px; }

/* Dock */
.dock {
  flex: none;
  align-self: center;
  width: 2663px;
  height: 148px;
  margin-top: 4px;
  padding: 19px 0 0 4px;
  display: flex;
  border: 2px solid #5f3941;
  border-radius: 44px;
  background: linear-gradient(#39141b, #461720);
  position: relative;
}
.app { position: relative; width: 126.77px; height: 122px; display: flex; justify-content: center; flex: none; }
.app svg { width: 95px; height: 95px; }
.on::after { content: ""; position: absolute; left: 58px; bottom: -1px; width: 8px; height: 8px; border-radius: 50%; background: #c08c96; }
.sep { width: 2px; height: 108px; margin: -1px 27px 0 28.2px; background: #7d545c; flex: none; }
.oct { font: 600 19px Inter, sans-serif; fill: #fff; text-anchor: middle; }
.day { font: 300 57px Inter, sans-serif; fill: #222; text-anchor: middle; letter-spacing: -1px; }
.dict { font: 48px "Liberation Serif", serif; fill: #f6f2f0; text-anchor: middle; }
.notif {
  position: absolute;
  left: 81px;
  top: -11px;
  width: 44px;
  height: 44px;
  border-radius: 50%;
  background: #e0493c;
  color: #fff;
  font-size: 24px;
  font-weight: 500;
  line-height: 44px;
  text-align: center;
}
```
